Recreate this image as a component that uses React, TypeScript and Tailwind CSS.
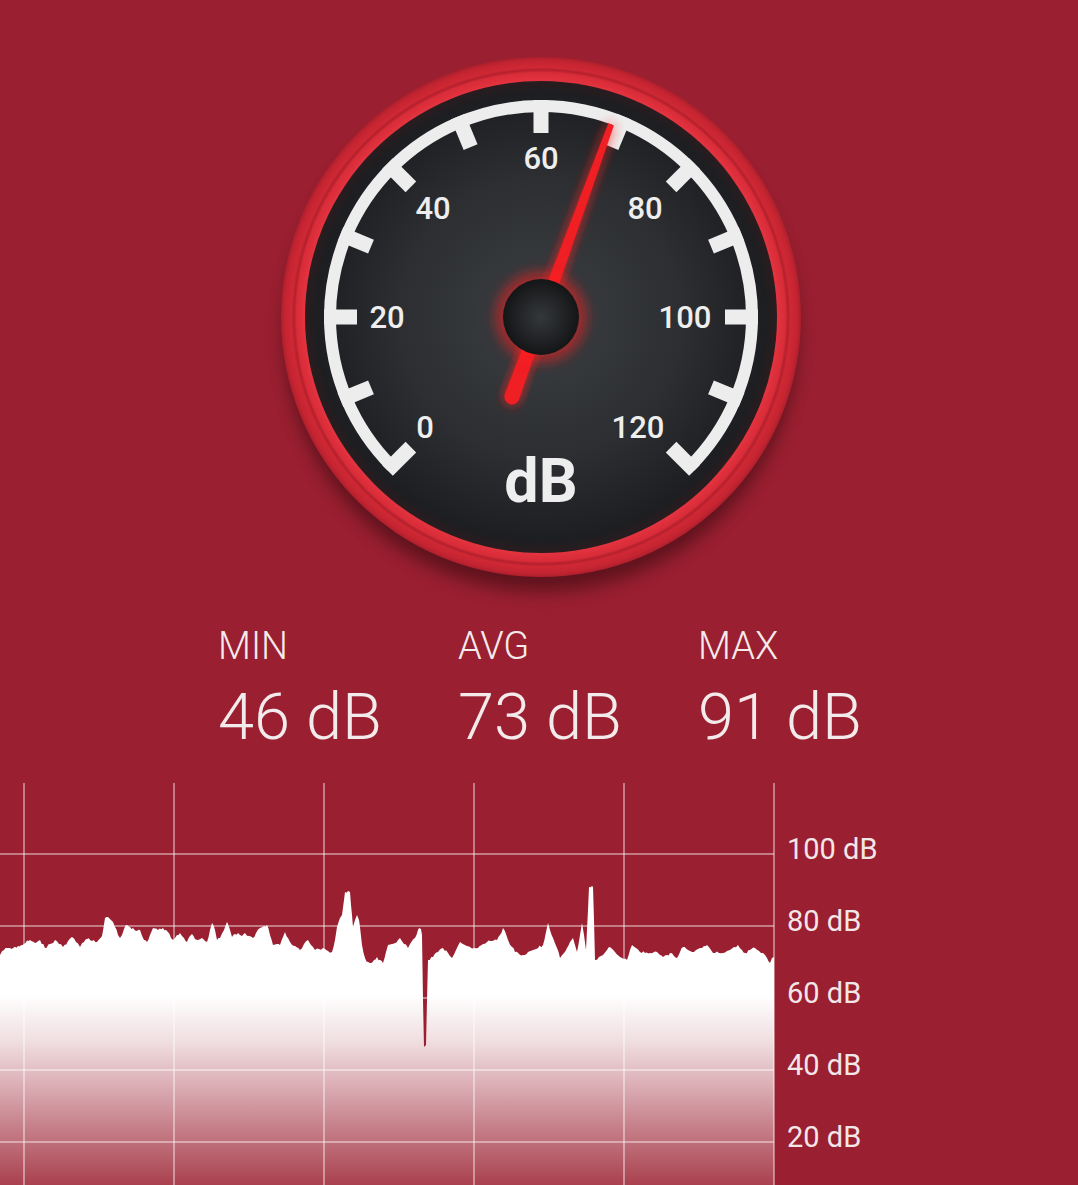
const CX = 300;
const CY = 300;

function polar(r: number, deg: number): [number, number] {
  const a = (deg * Math.PI) / 180;
  return [CX + r * Math.sin(a), CY - r * Math.cos(a)];
}

const tickAngles = Array.from({ length: 13 }, (_, i) => -135 + i * 22.5);

const gaugeLabels = [
  { t: '0', x: 184, y: 421 },
  { t: '20', x: 146, y: 311 },
  { t: '40', x: 192, y: 202 },
  { t: '60', x: 300, y: 152 },
  { t: '80', x: 404, y: 202 },
  { t: '100', x: 444, y: 311 },
  { t: '120', x: 397, y: 421 },
];

function Gauge() {
  const [sx, sy] = polar(211, -135);
  const [ex, ey] = polar(211, 135);
  const arc = `M ${sx} ${sy} A 211 211 0 1 1 ${ex} ${ey}`;
  const needle = 'M 297 95 L 303 95 L 307.5 385 A 7.5 7.5 0 0 1 292.5 385 Z';
  return (
    <svg width="600" height="600" viewBox="0 0 600 600" className="block">
      <defs>
        <radialGradient id="ring" gradientUnits="userSpaceOnUse" cx="300" cy="300" r="260">
          <stop offset="0.905" stopColor="#e43440" />
          <stop offset="0.94" stopColor="#d82c38" />
          <stop offset="0.95" stopColor="#b3202c" />
          <stop offset="0.96" stopColor="#cf2834" />
          <stop offset="0.985" stopColor="#c42431" />
          <stop offset="1" stopColor="#ad1f2c" />
        </radialGradient>
        <radialGradient id="face" gradientUnits="userSpaceOnUse" cx="300" cy="300" r="236">
          <stop offset="0" stopColor="#3c3f43" />
          <stop offset="0.6" stopColor="#2c2e31" />
          <stop offset="0.95" stopColor="#1d1e21" />
          <stop offset="1" stopColor="#2a1c1f" />
        </radialGradient>
        <radialGradient id="hub" gradientUnits="userSpaceOnUse" cx="300" cy="300" r="38">
          <stop offset="0" stopColor="#35383b" />
          <stop offset="1" stopColor="#141517" />
        </radialGradient>
        <filter id="shadow" x="-20%" y="-20%" width="140%" height="140%">
          <feGaussianBlur stdDeviation="9" />
        </filter>
        <filter id="glow" x="-50%" y="-50%" width="200%" height="200%">
          <feGaussianBlur stdDeviation="6" />
        </filter>
      </defs>
      <circle cx={CX} cy={CY + 18} r="256" fill="#000" opacity="0.4" filter="url(#shadow)" />
      <circle cx={CX} cy={CY} r="260" fill="url(#ring)" />
      <circle cx={CX} cy={CY} r="236" fill="url(#face)" />
      <path d={arc} fill="none" stroke="#ededed" strokeWidth="12" />
      {tickAngles.map((a) => (
        <rect
          key={a}
          x={CX - 7.5}
          y={CY - 217}
          width="15"
          height="33"
          fill="#ededed"
          transform={`rotate(${a} ${CX} ${CY})`}
        />
      ))}
      {gaugeLabels.map((l) => (
        <text key={l.t} x={l.x} y={l.y} textAnchor="middle" fill="#eeeeee" fontSize="31" fontWeight="500">
          {l.t}
        </text>
      ))}
      <text x="300" y="485" textAnchor="middle" fill="#eeeeee" fontSize="61" fontWeight="700">
        dB
      </text>
      <g transform={`rotate(20 ${CX} ${CY})`}>
        <path d={needle} fill="#ff2020" opacity="0.9" filter="url(#glow)" />
        <path d={needle} fill="#f01f24" />
      </g>
      <circle cx={CX} cy={CY} r="46" fill="#ff1f1f" opacity="0.5" filter="url(#glow)" />
      <circle cx={CX} cy={CY} r="38" fill="url(#hub)" />
    </svg>
  );
}

const pts: [number, number][] = [
  [0, 955], [4, 950], [10, 948], [18, 946], [24, 944], [30, 940], [35, 943], [40, 940], [45, 948], [50, 944],
  [55, 940], [59, 944], [63, 947], [68, 941], [72, 937], [76, 942], [80, 947], [84, 942], [87, 939], [92, 941],
  [97, 942], [102, 936], [105, 918], [108, 917], [111, 920], [115, 927], [118, 935], [120, 938], [124, 929], [127, 925],
  [130, 927], [133, 928], [137, 931], [140, 930], [144, 940], [147, 942], [150, 935], [153, 928], [158, 930], [163, 928],
  [166, 930], [168, 932], [171, 938], [173, 940], [177, 935], [180, 933], [184, 938], [187, 942], [190, 936], [192, 934],
  [195, 939], [197, 940], [202, 938], [205, 941], [207, 942], [210, 930], [212, 923], [215, 930], [217, 940], [220, 938],
  [224, 930], [227, 922], [230, 930], [232, 937], [235, 934], [238, 933], [242, 936], [245, 933], [249, 936], [253, 938],
  [256, 933], [260, 928], [264, 926], [267, 925], [270, 935], [273, 945], [277, 944], [280, 945], [283, 937], [285, 932],
  [288, 938], [290, 942], [295, 946], [300, 950], [304, 944], [308, 940], [311, 945], [315, 950], [319, 949], [323, 948],
  [328, 951], [332, 952], [335, 940], [337, 927], [340, 918], [342, 915], [344, 900], [345, 892], [348, 891], [350, 892],
  [351, 905], [352, 915], [353, 927], [355, 920], [357, 915], [359, 920], [360, 927], [362, 945], [365, 958], [368, 962],
  [370, 963], [374, 960], [377, 957], [380, 960], [383, 963], [386, 952], [388, 945], [392, 944], [395, 943], [398, 940],
  [400, 938], [404, 944], [408, 948], [412, 941], [415, 938], [418, 930], [419, 928], [421, 929], [422, 935], [423, 1000],
  [424, 1047], [426, 1045], [427, 1000], [428, 960], [433, 957], [438, 952], [443, 948], [448, 953], [452, 958], [456, 950],
  [460, 942], [465, 945], [470, 947], [474, 948], [478, 948], [483, 944], [487, 942], [492, 941], [497, 940], [500, 935],
  [503, 928], [506, 934], [508, 940], [512, 947], [515, 952], [519, 954], [523, 955], [528, 952], [533, 950], [538, 948],
  [543, 945], [546, 932], [548, 923], [550, 930], [553, 938], [557, 948], [560, 958], [564, 953], [567, 948], [570, 942],
  [573, 938], [575, 945], [577, 952], [580, 935], [582, 923], [584, 935], [586, 950], [588, 910], [589, 887], [592, 886],
  [593, 887], [594, 920], [595, 960], [599, 957], [603, 955], [607, 950], [610, 947], [615, 952], [620, 957], [624, 959],
  [627, 960], [630, 950], [632, 945], [636, 948], [640, 952], [645, 953], [650, 953], [654, 952], [657, 952], [660, 955],
  [663, 957], [667, 955], [670, 953], [674, 956], [677, 958], [680, 952], [683, 947], [688, 950], [692, 952], [696, 950],
  [700, 948], [704, 946], [707, 945], [711, 950], [715, 953], [719, 953], [723, 953], [727, 951], [730, 950], [734, 947],
  [738, 945], [742, 950], [745, 953], [750, 950], [755, 948], [759, 951], [763, 953], [767, 958], [770, 963], [772, 958],
  [774, 957],
];

function noise(x: number) {
  const n = Math.sin(x * 12.9898) * 43758.5453;
  return n - Math.floor(n) - 0.5;
}

function areaPath() {
  const top = 783;
  const out: string[] = [`M 0 402`];
  for (let i = 0; i < pts.length; i++) {
    const [x, y] = pts[i];
    out.push(`L ${x} ${y - top}`);
    if (i < pts.length - 1) {
      const [nx, ny] = pts[i + 1];
      const steps = Math.floor((nx - x) / 1.5);
      if (Math.abs(ny - y) < 20) {
        for (let s = 1; s < steps; s++) {
          const t = s / steps;
          const px = x + (nx - x) * t;
          const py = y + (ny - y) * t + noise(px) * 3;
          out.push(`L ${px.toFixed(1)} ${(py - top).toFixed(1)}`);
        }
      }
    }
  }
  out.push('L 774 402 Z');
  return out.join(' ');
}

const gridX = [24, 174, 324, 474, 624, 774];
const gridY = [
  { y: 71, t: '100 dB' },
  { y: 143, t: '80 dB' },
  { y: 215, t: '60 dB' },
  { y: 287, t: '40 dB' },
  { y: 359, t: '20 dB' },
];

function Chart() {
  return (
    <svg width="1078" height="402" viewBox="0 0 1078 402" className="block">
      <defs>
        <linearGradient id="fill" gradientUnits="userSpaceOnUse" x1="0" y1="212" x2="0" y2="402">
          <stop offset="0" stopColor="#fff" stopOpacity="1" />
          <stop offset="0.25" stopColor="#fff" stopOpacity="0.85" />
          <stop offset="1" stopColor="#fff" stopOpacity="0.15" />
        </linearGradient>
      </defs>
      <path d={areaPath()} fill="url(#fill)" />
      {gridX.map((x) => (
        <line key={x} x1={x} y1="0" x2={x} y2="402" stroke="#fff" strokeOpacity="0.55" strokeWidth="1.5" />
      ))}
      {gridY.map((g) => (
        <g key={g.t}>
          <line x1="0" y1={g.y} x2="774" y2={g.y} stroke="#fff" strokeOpacity="0.55" strokeWidth="1.5" />
          <text x="787" y={g.y + 5} fill="#f3e6e8" fontSize="29">
            {g.t}
          </text>
        </g>
      ))}
    </svg>
  );
}

const stats = [
  { label: 'MIN', value: '46 dB' },
  { label: 'AVG', value: '73 dB' },
  { label: 'MAX', value: '91 dB' },
];

export default function App() {
  return (
    <div className="w-[1078px] h-[1185px] overflow-hidden bg-[#9a1f30] flex flex-col font-['Roboto',sans-serif]">
      <div className="ml-[241px] mt-[17px]">
        <Gauge />
      </div>
      <div className="mt-[10px] pl-[218px] grid grid-cols-[240px_240px_240px] text-[#f3eaeb] font-light">
        {stats.map((s) => (
          <div key={s.label} className="flex flex-col">
            <span className="text-[38px] leading-[38px]">{s.label}</span>
            <span className="mt-[20px] text-[65px] leading-[65px]">{s.value}</span>
          </div>
        ))}
      </div>
      <div className="mt-[33px]">
        <Chart />
      </div>
    </div>
  );
}
